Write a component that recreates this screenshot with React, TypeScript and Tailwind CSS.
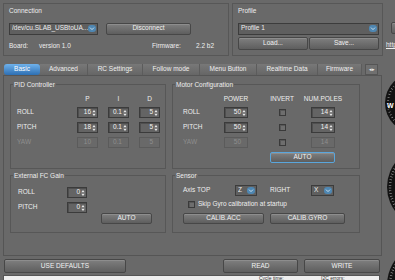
import React from 'react'

function Btn({ label, className = '' }: { label: string; className?: string }) {
  return (
    <div
      className={`flex shrink-0 items-center justify-center whitespace-nowrap rounded-[2px] border border-[#474747] bg-gradient-to-b from-[#7f7f7f] to-[#5e5e5e] text-[#f2f2f2] shadow-[inset_0_1px_0_#8d8d8d] ${className}`}
    >
      {label}
    </div>
  )
}

function Arrows() {
  return (
    <svg width="4" height="8" viewBox="0 0 4 8" className="shrink-0">
      <path d="M0.3 3.3 L2 1 L3.7 3.3Z M0.3 4.7 L2 7 L3.7 4.7Z" fill="#e8e8e8" />
    </svg>
  )
}

function Spin({ v, w = 'w-[21px]', off }: { v: string; w?: string; off?: boolean }) {
  return (
    <div
      className={`flex h-[11px] ${w} items-center border px-[1px] ${
        off
          ? 'border-[#5b5b5b] text-[#8e8e8e]'
          : 'border-[#3b3b3b] bg-[#646464] text-[#f2f2f2] shadow-[inset_1px_1px_0_#4f4f4f]'
      }`}
    >
      <span className={`flex-1 text-right ${off ? 'pr-[5px]' : 'pr-[1px]'}`}>{v}</span>
      {!off && <Arrows />}
    </div>
  )
}

function Check() {
  return <div className="h-[7px] w-[7px] border border-[#3a3a3a] bg-[#6e6e6e] shadow-[inset_1px_1px_0_#585858]" />
}

function Combo({ v, className = '' }: { v: string; className?: string }) {
  return (
    <div className={`flex shrink-0 items-center border border-[#3c3c3c] bg-[#5f5f5f] pl-[2px] pr-[1px] ${className}`}>
      <span className="flex-1 overflow-hidden whitespace-nowrap">{v}</span>
      <svg width="8" height="7" viewBox="0 0 8 7" className="shrink-0">
        <rect x="0" y="0" width="8" height="7" rx="3" fill="#4f87b2" />
        <path d="M2 2.6 L4 4.6 L6 2.6" stroke="#d6e6f2" strokeWidth="0.9" fill="none" />
      </svg>
    </div>
  )
}

function Group({ title, children }: { title: string; children: React.ReactNode }) {
  return (
    <fieldset className="border border-[#575757]">
      <legend className="ml-[2px] px-[1px] leading-[7px]">{title}</legend>
      {children}
    </fieldset>
  )
}

const tabs = [
  { name: 'Advanced', w: 'w-[48px]' },
  { name: 'RC Settings', w: 'w-[55px]' },
  { name: 'Follow mode', w: 'w-[57px]' },
  { name: 'Menu Button', w: 'w-[57px]' },
  { name: 'Realtime Data', w: 'w-[61px]' },
  { name: 'Firmware', w: 'w-[44px]' },
]

const axes = [
  { n: 'ROLL', p: '16', i: '0.1', d: '5', pw: '50', np: '14' },
  { n: 'PITCH', p: '18', i: '0.1', d: '5', pw: '50', np: '14' },
]

export default function App() {
  return (
    <div className="flex h-[280px] w-[395px] flex-col overflow-hidden bg-[#696969] font-['Liberation_Sans',Arial,sans-serif] text-[6.5px] leading-none text-[#eeeeee]">
      {/* connection / profile */}
      <div className="flex h-[58px] shrink-0 pl-[3px] pt-[3px]">
        <div className="flex h-[53px] w-[226px] shrink-0 flex-col border border-[#575757] px-[5px] pt-[4px]">
          <span>Connection</span>
          <div className="mt-[8px] flex h-[12px] gap-[8px]">
            <Combo v="/dev/cu.SLAB_USBtoUA..." className="w-[89px]" />
            <Btn label="Disconnect" className="w-[85px]" />
          </div>
          <div className="mt-[8px] flex whitespace-nowrap">
            <span className="w-[30px] shrink-0">Board:</span>
            <span className="w-[113px] shrink-0">version 1.0</span>
            <span className="w-[44px] shrink-0">Firmware:</span>
            <span className="shrink-0">2.2 b2</span>
          </div>
        </div>
        <div className="ml-[3px] flex h-[53px] w-[151px] shrink-0 flex-col border border-[#575757] pl-[5px] pr-[3px] pt-[4px]">
          <span>Profile</span>
          <Combo v="Profile 1" className="mt-[8px] h-[12px]" />
          <div className="mt-[2px] grid h-[13px] grid-cols-2 gap-[1px]">
            <Btn label="Load..." />
            <Btn label="Save..." />
          </div>
        </div>
        <div className="ml-[2px] flex h-[53px] w-[40px] shrink-0 flex-col pl-[6px] pt-[19px]">
          <Btn label="" className="h-[12px] w-[30px]" />
          <span className="-ml-[5px] mt-[8px] whitespace-nowrap underline">http://</span>
        </div>
      </div>

      <div className="flex flex-1">
        <div className="flex w-[383px] shrink-0 flex-col">
          {/* tabs */}
          <div className="mt-[6px] flex h-[11px] pl-[4px]">
            <div className="flex w-[36px] shrink-0 items-center justify-center rounded-[3px] bg-gradient-to-b from-[#6fb2ec] to-[#2d6fb3] text-white">
              Basic
            </div>
            {tabs.map((t) => (
              <div
                key={t.name}
                className={`flex ${t.w} shrink-0 items-center justify-center whitespace-nowrap border-r border-[#5c5c5c] bg-gradient-to-b from-[#787878] to-[#666666] text-[#efefef]`}
              >
                {t.name}
              </div>
            ))}
            <div className="ml-[3px] flex w-[13px] shrink-0 items-center justify-center border border-[#555] bg-[#707070] text-[5px]">
              ◂▸
            </div>
          </div>

          {/* tab panel */}
          <div className="ml-[3px] h-[181px] w-[379px] border border-[#555555] pl-[6px] pt-[5px]">
            <div className="grid grid-cols-[156px_188px] grid-rows-[88px_61px] gap-x-[6px] gap-y-[3px]">
              <Group title="PID Controller">
                <div className="mt-[8px] grid grid-cols-[50px_21px_21px_21px] items-center gap-x-[10px] gap-y-[4px] pl-[6px]">
                  <span />
                  <span className="h-[7px] justify-self-center">P</span>
                  <span className="h-[7px] justify-self-center">I</span>
                  <span className="h-[7px] justify-self-center">D</span>
                  {axes.map((a) => (
                    <React.Fragment key={a.n}>
                      <span>{a.n}</span>
                      <Spin v={a.p} />
                      <Spin v={a.i} />
                      <Spin v={a.d} />
                    </React.Fragment>
                  ))}
                  <span className="text-[#8e8e8e]">YAW</span>
                  <Spin v="10" off />
                  <Spin v="0.1" off />
                  <Spin v="5" off />
                </div>
              </Group>

              <Group title="Motor Configuration">
                <div className="mt-[8px] grid grid-cols-[41px_24px_14px_40px_9px_24px] items-center gap-y-[4px] pl-[10px]">
                  <span className="col-start-2 flex h-[7px] justify-center whitespace-nowrap">POWER</span>
                  <span className="col-start-4 flex h-[7px] justify-center whitespace-nowrap">INVERT</span>
                  <span className="col-start-6 flex h-[7px] justify-center whitespace-nowrap">NUM.POLES</span>
                  {axes.map((a) => (
                    <React.Fragment key={a.n}>
                      <span>{a.n}</span>
                      <Spin v={a.pw} w="w-[24px]" />
                      <div className="col-start-4 flex justify-center">
                        <Check />
                      </div>
                      <div className="col-start-6">
                        <Spin v={a.np} w="w-[24px]" />
                      </div>
                    </React.Fragment>
                  ))}
                  <span className="text-[#8e8e8e]">YAW</span>
                  <Spin v="50" w="w-[24px]" off />
                  <div className="col-start-4 flex justify-center">
                    <Check />
                  </div>
                  <div className="col-start-6">
                    <Spin v="14" w="w-[24px]" off />
                  </div>
                </div>
                <Btn
                  label="AUTO"
                  className="ml-[97px] mt-[4px] h-[11px] w-[65px] !border-[#5aa6dc] shadow-[0_0_0_1px_#3f7fb0]"
                />
              </Group>

              <Group title="External FC Gain">
                <div className="mt-[8px] grid grid-cols-[49px_20px] items-center gap-y-[4px] pl-[7px]">
                  <span>ROLL</span>
                  <Spin v="0" w="w-[20px]" />
                  <span>PITCH</span>
                  <Spin v="0" w="w-[20px]" />
                </div>
                <Btn label="AUTO" className="ml-[90px] h-[11px] w-[51px]" />
              </Group>

              <Group title="Sensor">
                <div className="mt-[6px] flex h-[11px] items-center pl-[10px]">
                  <span className="w-[52px] shrink-0">Axis TOP</span>
                  <Combo v="Z" className="h-[11px] w-[22px]" />
                  <span className="ml-[13px] w-[41px] shrink-0">RIGHT</span>
                  <Combo v="X" className="h-[11px] w-[23px]" />
                </div>
                <div className="mt-[5px] flex items-center gap-[3px] pl-[15px]">
                  <Check />
                  <span>Skip Gyro calibration at startup</span>
                </div>
                <div className="mt-[5px] flex h-[11px] gap-[6px] pl-[10px]">
                  <Btn label="CALIB.ACC" className="w-[81px]" />
                  <Btn label="CALIB.GYRO" className="w-[75px]" />
                </div>
              </Group>
            </div>
          </div>

          {/* bottom buttons */}
          <div className="mt-[3px] flex h-[14px] pl-[4px]">
            <Btn label="USE DEFAULTS" className="w-[122px]" />
            <Btn label="READ" className="ml-[97px] w-[75px]" />
            <Btn label="WRITE" className="ml-[6px] w-[76px]" />
          </div>

          {/* status */}
          <div className="ml-[3px] mt-[2px] flex h-[12px] w-[377px] border border-[#555] bg-[#eeeeee] pl-[255px] text-[5px] text-[#333]">
            <span className="w-[62px]">Cycle time:</span>
            <span>I2C errors:</span>
          </div>
        </div>

        {/* gauges */}
        <svg width="12" height="222" viewBox="0 0 12 222" className="shrink-0">
          <circle cx="32" cy="45" r="30" fill="#121212" />
          <circle cx="32" cy="45" r="27" fill="none" stroke="#bdbdbd" strokeWidth="2" strokeDasharray="0.5 2.5" />
          <text x="4" y="50" fontSize="7" fontWeight="bold" fill="#ffffff" fontFamily="Liberation Sans, Arial, sans-serif">
            W
          </text>
          <circle cx="44" cy="129" r="40" fill="#121212" />
          <circle cx="44" cy="129" r="37" fill="none" stroke="#bdbdbd" strokeWidth="2.5" strokeDasharray="0.5 2.3" />
          <circle cx="46" cy="227" r="42" fill="#121212" />
          <circle cx="46" cy="227" r="39" fill="none" stroke="#bdbdbd" strokeWidth="2.5" strokeDasharray="0.5 2.3" />
        </svg>
      </div>
    </div>
  )
}
